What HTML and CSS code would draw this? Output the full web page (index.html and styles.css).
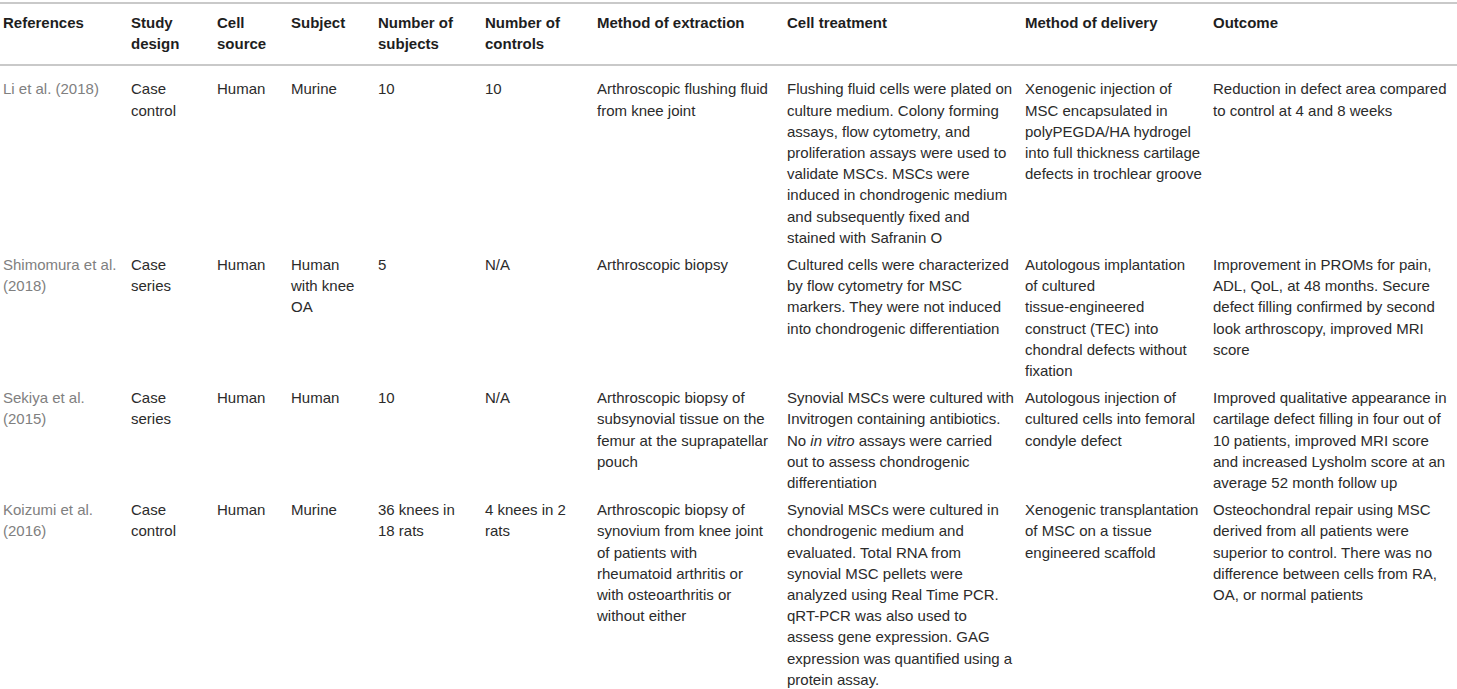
FILE: index.html
```html
<!DOCTYPE html>
<html lang="en">
<head>
  <meta charset="UTF-8">
  <title>Synovial MSC studies</title>
  <link rel="stylesheet" href="styles.css">
</head>
<body>

  <table class="study-table">
    <colgroup>
      <col class="col-ref">
      <col class="col-design">
      <col class="col-source">
      <col class="col-subject">
      <col class="col-subjects">
      <col class="col-controls">
      <col class="col-extraction">
      <col class="col-treatment">
      <col class="col-delivery">
      <col class="col-outcome">
    </colgroup>
    <thead>
      <tr>
        <th>References</th>
        <th>Study design</th>
        <th>Cell source</th>
        <th>Subject</th>
        <th>Number of subjects</th>
        <th>Number of controls</th>
        <th>Method of extraction</th>
        <th>Cell treatment</th>
        <th>Method of delivery</th>
        <th>Outcome</th>
      </tr>
    </thead>
    <tbody>
      <tr>
        <td class="ref">Li et al. (2018)</td>
        <td>Case control</td>
        <td>Human</td>
        <td>Murine</td>
        <td>10</td>
        <td>10</td>
        <td>Arthroscopic flushing fluid from knee joint</td>
        <td>Flushing fluid cells were plated on culture medium. Colony forming assays, flow cytometry, and proliferation assays were used to validate MSCs. MSCs were induced in chondrogenic medium and subsequently fixed and stained with Safranin O</td>
        <td>Xenogenic injection of MSC encapsulated in polyPEGDA/HA hydrogel into full thickness cartilage defects in trochlear groove</td>
        <td>Reduction in defect area compared to control at 4 and 8 weeks</td>
      </tr>
      <tr>
        <td class="ref">Shimomura et al. (2018)</td>
        <td>Case series</td>
        <td>Human</td>
        <td>Human with knee OA</td>
        <td>5</td>
        <td>N/A</td>
        <td>Arthroscopic biopsy</td>
        <td>Cultured cells were characterized by flow cytometry for MSC markers. They were not induced into chondrogenic differentiation</td>
        <td>Autologous implantation<br>of cultured<br>tissue-engineered<br>construct (TEC) into<br>chondral defects without<br>fixation</td>
        <td>Improvement in PROMs for pain, ADL, QoL, at 48 months. Secure defect filling confirmed by second look arthroscopy, improved MRI score</td>
      </tr>
      <tr>
        <td class="ref">Sekiya et al. (2015)</td>
        <td>Case series</td>
        <td>Human</td>
        <td>Human</td>
        <td>10</td>
        <td>N/A</td>
        <td>Arthroscopic biopsy of subsynovial tissue on the femur at the suprapatellar pouch</td>
        <td>Synovial MSCs were cultured with Invitrogen containing antibiotics. No <em>in vitro</em> assays were carried out to assess chondrogenic differentiation</td>
        <td>Autologous injection of cultured cells into femoral condyle defect</td>
        <td>Improved qualitative appearance in cartilage defect filling in four out of 10 patients, improved MRI score and increased Lysholm score at an average 52 month follow up</td>
      </tr>
      <tr>
        <td class="ref">Koizumi et al. (2016)</td>
        <td>Case control</td>
        <td>Human</td>
        <td>Murine</td>
        <td>36 knees in<br>18 rats</td>
        <td>4 knees in 2<br>rats</td>
        <td>Arthroscopic biopsy of<br>synovium from knee joint<br>of patients with<br>rheumatoid arthritis or<br>with osteoarthritis or<br>without either</td>
        <td>Synovial MSCs were cultured in chondrogenic medium and evaluated. Total RNA from synovial MSC pellets were analyzed using Real Time PCR. qRT-PCR was also used to assess gene expression. GAG expression was quantified using a protein assay.</td>
        <td>Xenogenic transplantation of MSC on a tissue engineered scaffold</td>
        <td>Osteochondral repair using MSC derived from all patients were superior to control. There was no difference between cells from RA, OA, or normal patients</td>
      </tr>
    </tbody>
  </table>

</body>
</html>
```

FILE: styles.css
```css
:root {
  --text-color: #2b2b2b;
  --head-color: #1e1e1e;
  --ref-color: #808080;
  --rule-color: #c9c9c9;
}

* { margin: 0; padding: 0; box-sizing: border-box; }

body {
  font-family: 'Liberation Sans', Arial, sans-serif;
  font-size: 15px;
  line-height: 21.2px;
  color: var(--text-color);
  background: white;
  padding-top: 2px;
}

.study-table {
  width: 1457px;
  table-layout: fixed;
  border-collapse: collapse;
  text-align: left;
  border-top: 2px solid var(--rule-color);
}

.col-ref { width: 131px; }
.col-design { width: 86px; }
.col-source { width: 74px; }
.col-subject { width: 87px; }
.col-subjects { width: 107px; }
.col-controls { width: 112px; }
.col-extraction { width: 190px; }
.col-treatment { width: 238px; }
.col-delivery { width: 188px; }
.col-outcome { width: 244px; }

th, td {
  vertical-align: top;
  padding: 3px 10px 3px 0;
}

th:first-child, td:first-child {
  padding-left: 3px;
}

th:last-child, td:last-child {
  padding-right: 0;
}

th {
  font-weight: bold;
  color: var(--head-color);
  padding-top: 8px;
  padding-bottom: 10px;
  border-bottom: 2px solid var(--rule-color);
}

tbody tr:first-child td {
  padding-top: 12px;
}

td.ref {
  color: var(--ref-color);
}
```
